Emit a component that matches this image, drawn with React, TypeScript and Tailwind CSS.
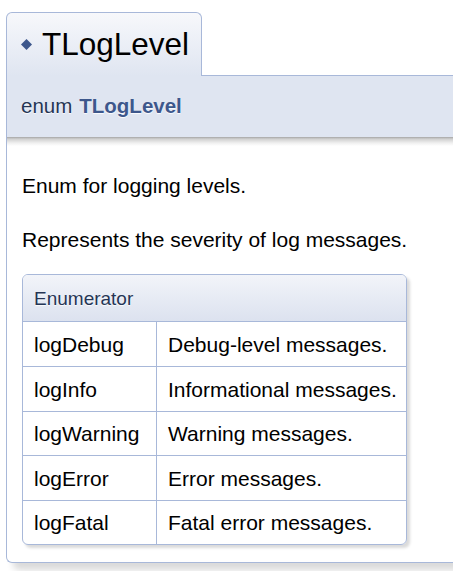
import React from "react";

const rows: { name: string; desc: string; h: string }[] = [
  { name: "logDebug", desc: "Debug-level messages.", h: "h-[45px]" },
  { name: "logInfo", desc: "Informational messages.", h: "h-[45px]" },
  { name: "logWarning", desc: "Warning messages.", h: "h-[44px]" },
  { name: "logError", desc: "Error messages.", h: "h-[45px]" },
  { name: "logFatal", desc: "Fatal error messages.", h: "h-[44px]" },
];

export default function App() {
  return (
    <div className="w-[453px] h-[571px] overflow-hidden bg-white font-['Liberation_Sans',Arial,sans-serif]">
      <div className="pt-[12px] pl-[6px] w-[520px]">
        {/* title tab row */}
        <div className="flex h-[64px]">
          <div className="w-[196px] flex items-center border border-b-0 border-[#A8B8D9] rounded-t-[6px] bg-[linear-gradient(to_bottom,#f7f8fb,#dfe5f1)] pl-[14px]">
            <svg width="11" height="11" viewBox="0 0 11 11" className="shrink-0">
              <polygon points="5.5,0 11,5.5 5.5,11 0,5.5" fill="#3D578C" />
            </svg>
            <span className="ml-[10px] text-[31.5px] leading-none text-black">TLogLevel</span>
          </div>
          <div className="flex-1 border-b border-[#A8B8D9]" />
        </div>
        {/* prototype */}
        <div className="h-[61px] flex items-center border-l border-[#A8B8D9] bg-[#DFE5F1] pl-[14px] text-[20.5px] text-[#253555] [text-shadow:0_1px_1px_rgba(255,255,255,0.9)]">
          <span>enum</span>
          <span className="ml-[7px] font-bold text-[#3D578C]">TLogLevel</span>
        </div>
        {/* doc */}
        <div className="border-l border-b border-[#A8B8D9] rounded-bl-[6px] bg-white bg-[linear-gradient(to_bottom,#a5a5a5_0px,#d0d0d0_2px,#f0f0f0_6px,#ffffff_9px)] pl-[15px] pt-[32px] pb-[17px] text-[21px] leading-[33px] text-black shadow-[7px_7px_7px_rgba(0,0,0,0.15)]">
          <p>Enum for logging levels.</p>
          <p className="mt-[21px]">Represents the severity of log messages.</p>
          <div className="mt-[18px] w-[385px] border border-[#A8B8D9] rounded-[6px] shadow-[3px_3px_3px_rgba(0,0,0,0.15)] overflow-hidden">
            <div className="h-[46px] flex items-center pl-[11px] text-[19px] text-[#253555] bg-[linear-gradient(to_bottom,#f2f4f9,#dce2ef)] [text-shadow:0_1px_1px_rgba(255,255,255,0.9)]">
              Enumerator
            </div>
            {rows.map((r) => (
              <div
                key={r.name}
                className={`grid grid-cols-[133px_1fr] border-t border-[#A8B8D9] ${r.h}`}
              >
                <div className="flex items-center pl-[11px]">{r.name}</div>
                <div className="flex items-center pl-[11px] border-l border-[#A8B8D9]">{r.desc}</div>
              </div>
            ))}
          </div>
        </div>
      </div>
    </div>
  );
}
